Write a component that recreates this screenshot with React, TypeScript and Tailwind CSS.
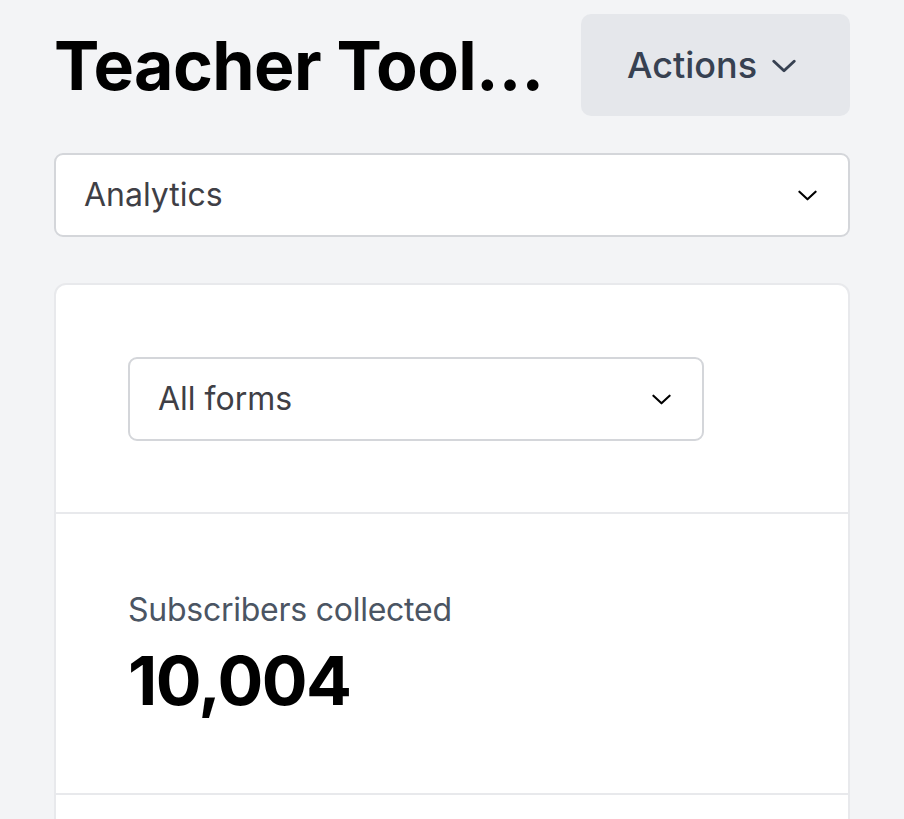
import React from 'react';

const Chevron: React.FC<{ className?: string; strokeWidth?: number }> = ({ className, strokeWidth = 2 }) => (
  <svg viewBox="0 0 20 11" fill="none" className={className}>
    <polyline
      points="1.5,1.5 10,9.5 18.5,1.5"
      stroke="currentColor"
      strokeWidth={strokeWidth}
      strokeLinecap="round"
      strokeLinejoin="round"
    />
  </svg>
);

const SelectBox: React.FC<{ label: string; className?: string }> = ({ label, className = '' }) => (
  <div
    className={`flex items-center justify-between h-[84px] bg-white border-2 border-[#d4d6da] rounded-[9px] pl-[28px] pr-[31px] ${className}`}
  >
    <span className="text-[32px] leading-[48px] text-[#3f3f46]">{label}</span>
    <Chevron className="w-[19px] h-[11px] text-black" strokeWidth={2.2} />
  </div>
);

export default function App() {
  return (
    <div
      className="min-h-screen bg-[#f3f4f6] px-[54px] pt-[14px]"
      style={{ fontFamily: 'Inter, "Noto Sans", sans-serif' }}
    >
      <div className="flex items-center gap-6">
        <h1 className="flex-1 min-w-0 truncate text-[68px] leading-[84px] font-bold text-black tracking-[-0.6px]">
          Teacher Toolkit Weekly
        </h1>
        <button className="flex items-center justify-start gap-[15px] w-[269px] h-[102px] bg-[#e5e7eb] rounded-[10px] pl-[46px] text-[#374151]">
          <span className="text-[36px] leading-[44px] font-medium">Actions</span>
          <Chevron className="w-[24px] h-[14px] mt-[2px]" strokeWidth={2.4} />
        </button>
      </div>

      <SelectBox label="Analytics" className="mt-[37px]" />

      <div className="mt-[46px] bg-white border-2 border-[#e8e9ec] rounded-[12px] overflow-hidden">
        <div className="p-[72px] pb-[71px]">
          <SelectBox label="All forms" className="w-[576px]" />
        </div>
        <div className="border-t-2 border-[#e8e9ec] px-[72px] pt-[72px] pb-[70px]">
          <p className="text-[32px] leading-[48px] text-[#4b5563] tracking-[-0.25px]">Subscribers collected</p>
          <p className="mt-[4px] text-[68px] leading-[85px] font-bold text-black tracking-[-1.5px]">10,004</p>
        </div>
        <div className="border-t-2 border-[#e8e9ec] h-[120px]" />
      </div>
    </div>
  );
}
